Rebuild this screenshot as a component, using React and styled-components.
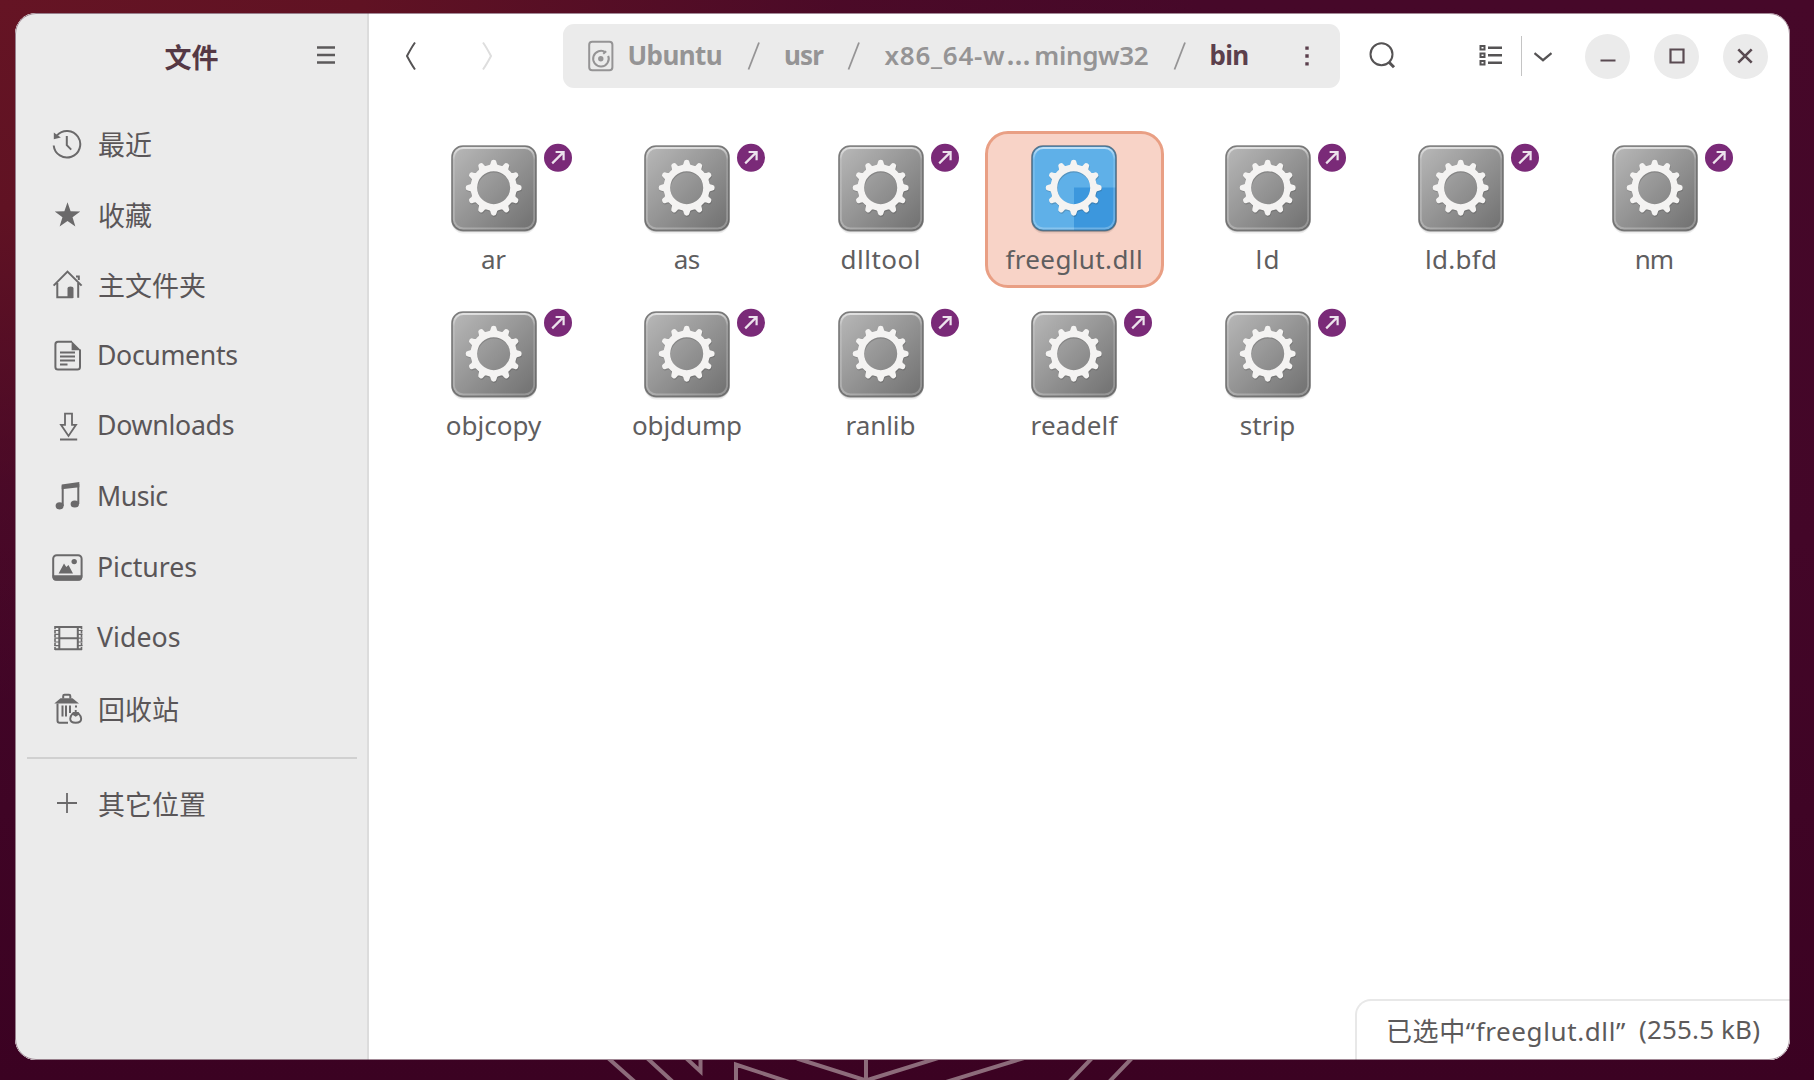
import React from "react";
import styled, { createGlobalStyle } from "styled-components";

const latin = '"Noto Sans", "Noto Sans CJK SC", sans-serif';

const Global = createGlobalStyle`
  * { box-sizing: border-box; }
  body { margin: 0; overflow: hidden; font-family: ${latin}; color: #5c5a5b; }
`;

const Desktop = styled.div`
  position: relative;
  width: 1814px;
  height: 1080px;
  padding: 13px 24.5px 20px 15px;
  background:
    radial-gradient(ellipse 1200px 700px at 0 0, #651424 0%, #601223 30%, rgba(80, 12, 38, 0.5) 70%, rgba(70, 8, 40, 0) 100%),
    linear-gradient(180deg, #460829 0%, #430628 50%, #3b0222 100%);
`;

const WallpaperLines = styled.svg`
  position: absolute;
  left: 590px;
  top: 1058px;
`;

const Window = styled.div`
  position: relative;
  display: flex;
  height: 1047px;
  border-radius: 21px;
  overflow: hidden;
  background: #fff;
  &::after {
    content: "";
    position: absolute;
    inset: 0;
    border: 1px solid rgba(70, 20, 45, 0.5);
    border-radius: 21px;
    pointer-events: none;
  }
`;

const Sidebar = styled.aside`
  width: 354px;
  flex: none;
  background: #ebebeb;
  border-right: 2px solid #dcdcdc;
`;

const SidebarHeader = styled.header`
  display: grid;
  grid-template-columns: 1fr 20px;
  align-items: center;
  height: 84px;
  padding: 0 31px 0 51px;
`;

const Title = styled.h1`
  margin: 0;
  padding: 4px 0 0 1px;
  text-align: center;
  font: 700 27px/40px "Noto Sans CJK SC", sans-serif;
  color: #553844;
`;

const Places = styled.ul`
  list-style: none;
  margin: 0;
  padding: 12px 0 0;
`;

const Place = styled.li`
  display: flex;
  align-items: center;
  height: 70.55px;
  padding-left: 37px;
  gap: 13px;
  color: #6a696a;
`;

const PlaceLabel = styled.span`
  font-size: ${(p) => (p.$cjk ? 27 : 26.7)}px;
  line-height: 40px;
  padding: ${(p) => (p.$cjk ? "2px 0 0 1px" : "0 0 2px")};
  margin-top: ${(p) => p.$drop || 0}px;
  letter-spacing: ${(p) => p.$ls || 0}px;
  color: #5a5658;
  white-space: nowrap;
`;

const Separator = styled.hr`
  width: 330px;
  height: 2px;
  margin: 13px 0 9px 12px;
  border: 0;
  background: #d0d0d0;
`;

const Main = styled.main`
  flex: 1;
  display: flex;
  flex-direction: column;
  min-width: 0;
`;

const Toolbar = styled.header`
  display: flex;
  align-items: center;
  height: 86px;
  flex: none;
`;

const Slot = styled.div`
  display: flex;
  flex: none;
  margin-left: ${(p) => p.$before || 0}px;
  color: ${(p) => p.$color || "#555354"};
`;

const PathBar = styled.nav`
  display: flex;
  flex: none;
  align-items: center;
  width: 777px;
  height: 64px;
  margin-left: 69px;
  border-radius: 11px;
  background: #ebebeb;
`;

const Crumb = styled.span`
  flex: none;
  width: ${(p) => p.$w}px;
  margin-left: ${(p) => p.$before}px;
  padding-bottom: 2px;
  font-size: 26px;
  line-height: 40px;
  font-weight: ${(p) => p.$weight || 700};
  letter-spacing: ${(p) => p.$ls || 0}px;
  color: ${(p) => (p.$current ? "#5b3f4c" : "#959495")};
  white-space: nowrap;
`;

const Ellipsis = styled.span`
  padding: 0 3px 0 1px;
  font-size: 29px;
  line-height: 1;
`;

const CrumbTail = styled.span`
  letter-spacing: -0.35px;
`;

const Divider = styled.div`
  flex: none;
  width: 1px;
  height: 40px;
  margin-left: 18px;
  background: #c4c4c4;
`;

const WindowButton = styled.button`
  display: grid;
  place-items: center;
  flex: none;
  width: 45px;
  height: 45px;
  padding: 0;
  margin-left: ${(p) => p.$before || 23.8}px;
  border: 0;
  border-radius: 50%;
  color: #5a4b52;
  background: #ebebeb;
`;

const Files = styled.div`
  display: grid;
  grid-template-columns: repeat(7, 179px);
  grid-auto-rows: 157px;
  gap: 8.5px 14.5px;
  padding: 32px 0 0 35px;
`;

const Tile = styled.div`
  position: relative;
  display: flex;
  flex-direction: column;
  align-items: center;
  padding-top: ${(p) => (p.$selected ? 11 : 14)}px;
  border-radius: 23px;
  border: ${(p) => (p.$selected ? "3px solid #e99f84" : "0")};
  background: ${(p) => (p.$selected ? "#f8d3c7" : "transparent")};
`;

const FileArt = styled.svg`
  flex: none;
`;

const FileName = styled.span`
  margin-top: 4px;
  font-size: 26px;
  line-height: 40px;
  letter-spacing: ${(p) => p.$ls || 0}px;
  margin-right: ${(p) => -(p.$ls || 0)}px;
  white-space: nowrap;
  color: #5f5e5f;
`;

const Emblem = styled.svg`
  position: absolute;
  left: 138.5px;
  top: 11.5px;
`;

const Status = styled.footer`
  position: absolute;
  right: 0;
  bottom: 0;
  display: flex;
  align-items: center;
  width: 434.5px;
  height: 61px;
  padding: 0 0 0 29px;
  border: 2px solid #e8e8e8;
  border-width: 2px 0 0 2px;
  border-top-left-radius: 16px;
  background: #fff;
`;

const StatusText = styled.span`
  flex: none;
  width: ${(p) => p.$w}px;
  padding-bottom: ${(p) => p.$lift || 0}px;
  font-size: 26px;
  line-height: 40px;
  letter-spacing: ${(p) => p.$ls}px;
  white-space: nowrap;
`;

const Glyph = ({ w = 32, h, children, sw = 2 }) => (
  <svg width={w} height={h || w} viewBox={`0 0 ${w} ${h || w}`} fill="none" stroke="currentColor" strokeWidth={sw}>
    {children}
  </svg>
);

const star = Array.from({ length: 10 }, (_, i) => {
  const r = i % 2 ? 5.3 : 13.4;
  const a = (i * Math.PI) / 5 - Math.PI / 2;
  return `${15.5 + r * Math.cos(a)},${16.6 + r * Math.sin(a)}`;
}).join(" ");

const icons = {
  recent: (
    <Glyph>
      <path d="M1.7 17.5A13.3 13.3 0 1 0 5 7.4" />
      <path d="M1.8 4.6V11.3L8.8 9.6Z" fill="currentColor" stroke="none" />
      <path d="M14.8 8v9.2l4.4 4.4" />
    </Glyph>
  ),
  star: (
    <Glyph>
      <polygon points={star} fill="currentColor" stroke="none" />
    </Glyph>
  ),
  home: (
    <Glyph>
      <path d="M1.6 16.6 15.5 2.6 29.6 16.6M5.3 14v14.2h15.5M26.2 14v14.8" />
      <path d="M15.5 29V19.5q0-2 3-2t3 2V29Z" fill="currentColor" stroke="none" />
      <path d="M24 7.6h2.8v3.4" />
    </Glyph>
  ),
  documents: (
    <Glyph>
      <path d="M20 1.8H6Q3.4 1.8 3.4 4.4V27Q3.4 29.6 6 29.6H25.4Q28 29.6 28 27V9.6" />
      <path d="M19.6 1 28.9 10.2H19.6Z" fill="currentColor" stroke="none" />
      <path d="M8 12.4h15M8 16.4h15M8 20.4h15M8 24.4h7.5" />
    </Glyph>
  ),
  downloads: (
    <Glyph>
      <path d="M13 3.6h7v11.2h4L16.5 26 9 14.8h4Z" strokeWidth="1.8" />
      <path d="M8 29.5h17.2" />
    </Glyph>
  ),
  music: (
    <Glyph>
      <path d="M10.7 25V4.5M26.3 23V3" />
      <path d="M9.7 3.5 27.3 1V6.2L9.7 8.2Z" fill="currentColor" stroke="none" />
      <ellipse cx="7.6" cy="24.8" rx="4" ry="3.6" fill="currentColor" stroke="none" />
      <ellipse cx="22.8" cy="23" rx="4.2" ry="3.6" fill="currentColor" stroke="none" />
    </Glyph>
  ),
  pictures: (
    <Glyph>
      <rect x="1.2" y="3.2" width="28.4" height="24.6" rx="3.5" />
      <path d="M.6 23.2h29.6v2q0 3.4-3.4 3.4H4Q.6 28.6 .6 25.2Z" fill="currentColor" stroke="none" />
      <path d="M6.6 21.4 12 11.5 14.3 15 16.5 13 21 21.4Z" fill="currentColor" stroke="none" />
      <circle cx="22.2" cy="9.6" r="2.7" fill="currentColor" stroke="none" />
    </Glyph>
  ),
  videos: (
    <Glyph>
      <path d="M3 4v24M29.5 4v24" strokeDasharray="3.2 1" strokeWidth="1.6" />
      <path d="M7.3 4v24M25.8 4v24M3 4.9h27M7 16.2h19M3 27.2h27" />
      <path d="M2.5 8.5h5M2.5 12.3h5M2.5 16.2h5M2.5 20h5M2.5 23.7h5M25.5 8.5h5M25.5 12.3h5M25.5 16.2h5M25.5 20h5M25.5 23.7h5" strokeWidth="1.2" />
    </Glyph>
  ),
  trash: (
    <Glyph>
      <path d="M2.3 10.4 8.5 5.2H20.5L27 10.4Z" fill="currentColor" stroke="none" />
      <path d="M11.2 5.5V3Q11.2 1.8 12.5 1.8H17Q18.3 1.8 18.3 3V5.5" />
      <path d="M5.5 10.5V27.5Q5.5 29.8 7.6 29.8H16M10.5 12.5v11M14 12.5v11M18 12.5v7.5M24 12.5v2" />
      <path d="M23.7 17v3.5M20.6 20.6Q18.2 23 18.2 25.8 18.2 29.8 23.7 29.8 29.2 29.8 29.2 25.8 29.2 23 26.6 20.6L23.7 22.6Z" strokeWidth="1.9" />
      <path d="M20.8 19h6v3h-6z" fill="currentColor" stroke="none" />
    </Glyph>
  ),
  plus: (
    <Glyph sw={1.8}>
      <path d="M5 16h20M15 6v20" />
    </Glyph>
  ),
};

const places = [
  { icon: "recent", label: "最近", cjk: true },
  { icon: "star", label: "收藏", cjk: true },
  { icon: "home", label: "主文件夹", cjk: true },
  { icon: "documents", label: "Documents", ls: -0.36 },
  { icon: "downloads", label: "Downloads", ls: -0.28 },
  { icon: "music", label: "Music", ls: -0.5 },
  { icon: "pictures", label: "Pictures", ls: -0.05 },
  { icon: "videos", label: "Videos", ls: 0.05 },
  { icon: "trash", label: "回收站", cjk: true },
];

const files = [
  { name: "ar", ls: -0.5 },
  { name: "as", ls: -0.6 },
  { name: "dlltool", ls: 0.5 },
  { name: "freeglut.dll", ls: 0.38, selected: true },
  { name: "ld", ls: 1.2 },
  { name: "ld.bfd", ls: 0.3 },
  { name: "nm", ls: -1 },
  { name: "objcopy", ls: 0 },
  { name: "objdump", ls: -0.1 },
  { name: "ranlib", ls: -0.05 },
  { name: "readelf", ls: 0.2 },
  { name: "strip", ls: 0 },
];

const Cog = ({ fill, opacity = 1 }) => (
  <g fill={fill} opacity={opacity}>
    <circle cx="42.7" cy="42.7" r="19.8" fill="none" stroke={fill} strokeWidth="6.6" />
    {Array.from({ length: 12 }, (_, i) => (
      <path
        key={i}
        d="M37.6 21.5Q39.8 19.6 40 16.8 40.2 14.7 42.7 14.7 45.2 14.7 45.4 16.8 45.6 19.6 47.8 21.5Z"
        transform={`rotate(${i * 30} 42.7 42.7)`}
      />
    ))}
  </g>
);

const FileIcon = ({ selected }) => (
  <FileArt width="86" height="90" viewBox="0 0 86 90">
    <defs>
      <linearGradient id="steel" x1="0" y1="0" x2="1" y2="1">
        <stop offset="0" stopColor="#b9b9b9" />
        <stop offset="1" stopColor="#6f6f6f" />
      </linearGradient>
      <linearGradient id="gloss" x1="0" y1="0" x2="0" y2="1">
        <stop offset="0" stopColor="#fff" stopOpacity="0.6" />
        <stop offset="0.15" stopColor="#fff" stopOpacity="0.12" />
        <stop offset="1" stopColor="#fff" stopOpacity="0.25" />
      </linearGradient>
      <clipPath id="quarter">
        <rect x="43" y="42.5" width="43" height="44" />
      </clipPath>
    </defs>
    <rect x="0.5" y="3.5" width="85" height="85" rx="12" fill="#000" opacity="0.07" />
    <rect x="0.5" y="2.5" width="85" height="84.5" rx="12" fill="#000" opacity="0.16" />
    <rect x="1" y="1" width="84" height="84.5" rx="11" fill={selected ? "#5fb0e8" : "url(#steel)"} />
    {selected && <rect x="1" y="1" width="84" height="84.5" rx="11" fill="#3c97dd" clipPath="url(#quarter)" />}
    <rect x="2.8" y="3" width="80.4" height="80.6" rx="9.5" fill="none" stroke="url(#gloss)" strokeWidth="2" />
    <rect x="1" y="1" width="84" height="84.5" rx="11" fill="none" stroke={selected ? "#41637c" : "#666"} strokeOpacity="0.8" strokeWidth="1.6" />
    <g transform="translate(0.5 1.2)">
      <Cog fill="#333" opacity={0.22} />
    </g>
    <Cog fill="#f4f3f2" />
  </FileArt>
);

const Slash = ({ before }) => (
  <Slot $before={before} $color="#959495">
    <Glyph w={13} h={28} sw={1.8}>
      <path d="M1.5 27.5 12 .5" />
    </Glyph>
  </Slot>
);

export default function App() {
  return (
    <>
      <Global />
      <Desktop>
        <WallpaperLines width="560" height="22" viewBox="590 1058 560 22" fill="none" stroke="#8d6c7b" strokeWidth="4">
          <path d="M608 1058 635 1082M647 1058 673 1082M686 1058 700.5 1071.5V1058M736 1082V1064.5L789 1082M797 1058.5 866 1080.5 938 1058M866 1058V1080M1024 1058 946 1082M1092 1058 1069 1082M1132 1058 1109 1082" />
        </WallpaperLines>
        <Window>
          <Sidebar>
            <SidebarHeader>
              <Title>文件</Title>
              <Glyph w={20} sw={2.4}>
                <path d="M1 2.5h18M1 10h18M1 17.5h18" />
              </Glyph>
            </SidebarHeader>
            <Places>
              {places.map(({ icon, label, ls, cjk }) => (
                <Place key={label}>
                  {icons[icon]}
                  <PlaceLabel $ls={ls} $cjk={cjk}>{label}</PlaceLabel>
                </Place>
              ))}
            </Places>
            <Separator />
            <Place as="div">
              {icons.plus}
              <PlaceLabel $cjk $drop={2}>其它位置</PlaceLabel>
            </Place>
          </Sidebar>
          <Main>
            <Toolbar>
              <Slot $before={35}>
                <Glyph w={14} h={30}>
                  <path d="M11 1.5Q7.500 6.5 3 15 7.5 23.5 11 28.5" />
                </Glyph>
              </Slot>
              <Slot $before={62} $color="#dedede">
                <Glyph w={14} h={30}>
                  <path d="M3 1.5Q6.5 6.5 11 15 6.5 23.5 3 28.5" />
                </Glyph>
              </Slot>
              <PathBar>
                <Slot $before={25} $color="#959495">
                  <Glyph w={26} h={32}>
                    <rect x="1.2" y="1.8" width="23.2" height="28.4" rx="3" />
                    <path d="M17.6 12.4A7.8 7.8 0 1 0 20.2 15.8M15.2 13.8 18.2 11.2" />
                    <circle cx="12.8" cy="18.8" r="2.7" fill="currentColor" stroke="none" />
                  </Glyph>
                </Slot>
                <Crumb $before={13.5} $w={92} $ls={-0.6}>Ubuntu</Crumb>
                <Slash before={27.5} />
                <Crumb $before={24} $w={37} $ls={-0.9}>usr</Crumb>
                <Slash before={26} />
                <Crumb $before={24.5} $w={264} $weight={600} $ls={0.75}>
                  x86_64-w<Ellipsis>…</Ellipsis><CrumbTail>mingw32</CrumbTail>
                </Crumb>
                <Slash before={24.5} />
                <Crumb $before={23.5} $w={38} $ls={-0.7} $current>bin</Crumb>
                <Slot $before={56.5} $color="#5b3f4c">
                  <Glyph w={6} h={22}>
                    <path d="M3 1.4v3.4M3 9.3v3.4M3 17.200v3.4" strokeWidth="3.4" />
                  </Glyph>
                </Slot>
              </PathBar>
              <Slot $before={28}>
                <Glyph w={28}>
                  <circle cx="13.5" cy="12.3" r="11" />
                  <path d="M20.8 20 26 25.3" strokeWidth="3" />
                </Glyph>
              </Slot>
              <Slot $before={83}>
                <Glyph w={24}>
                  <path d="M1.5 2h4v3.6h-4zM1.5 9.5h4v3.6h-4zM1.5 17h4v3.6h-4z" />
                  <path d="M9 3.7h14M9 11.2h14M9 18.7h14" strokeWidth="2.4" />
                </Glyph>
              </Slot>
              <Divider />
              <Slot $before={10.5}>
                <Glyph w={20} h={12} sw={2.2}>
                  <path d="M1.5 3.200 10 10.200 18.5 3.200" />
                </Glyph>
              </Slot>
              <WindowButton $before={32.8}>
                <Glyph w={16}><path d="M.5 12.5h15" /></Glyph>
              </WindowButton>
              <WindowButton>
                <Glyph w={16} sw={2.2}><path d="M1.5 1.5h13v13h-13z" /></Glyph>
              </WindowButton>
              <WindowButton>
                <Glyph w={16} sw={2.6}><path d="M1.3 1.3 14.7 14.7M14.7 1.3 1.3 14.7" /></Glyph>
              </WindowButton>
            </Toolbar>
            <Files>
              {files.map(({ name, ls, selected }) => (
                <Tile key={name} $selected={selected}>
                  <FileIcon selected={selected} />
                  <FileName $ls={ls}>{name}</FileName>
                  {!selected && (
                    <Emblem width="30" height="30" viewBox="0 0 30 30">
                      <circle cx="15" cy="14.8" r="14" fill="#7a2a78" />
                      <path d="M9.2 20.4 20.2 9.4M12.6 9H20.6V17.2" fill="none" stroke="#ece2ec" strokeWidth="2.2" />
                    </Emblem>
                  )}
                </Tile>
              ))}
            </Files>
          </Main>
          <Status>
            <StatusText $w={253} $ls={0.6}>已选中“freeglut.dll”</StatusText>
            <StatusText $w={120} $ls={0.15} $lift={3}>(255.5 kB)</StatusText>
          </Status>
        </Window>
      </Desktop>
    </>
  );
}
